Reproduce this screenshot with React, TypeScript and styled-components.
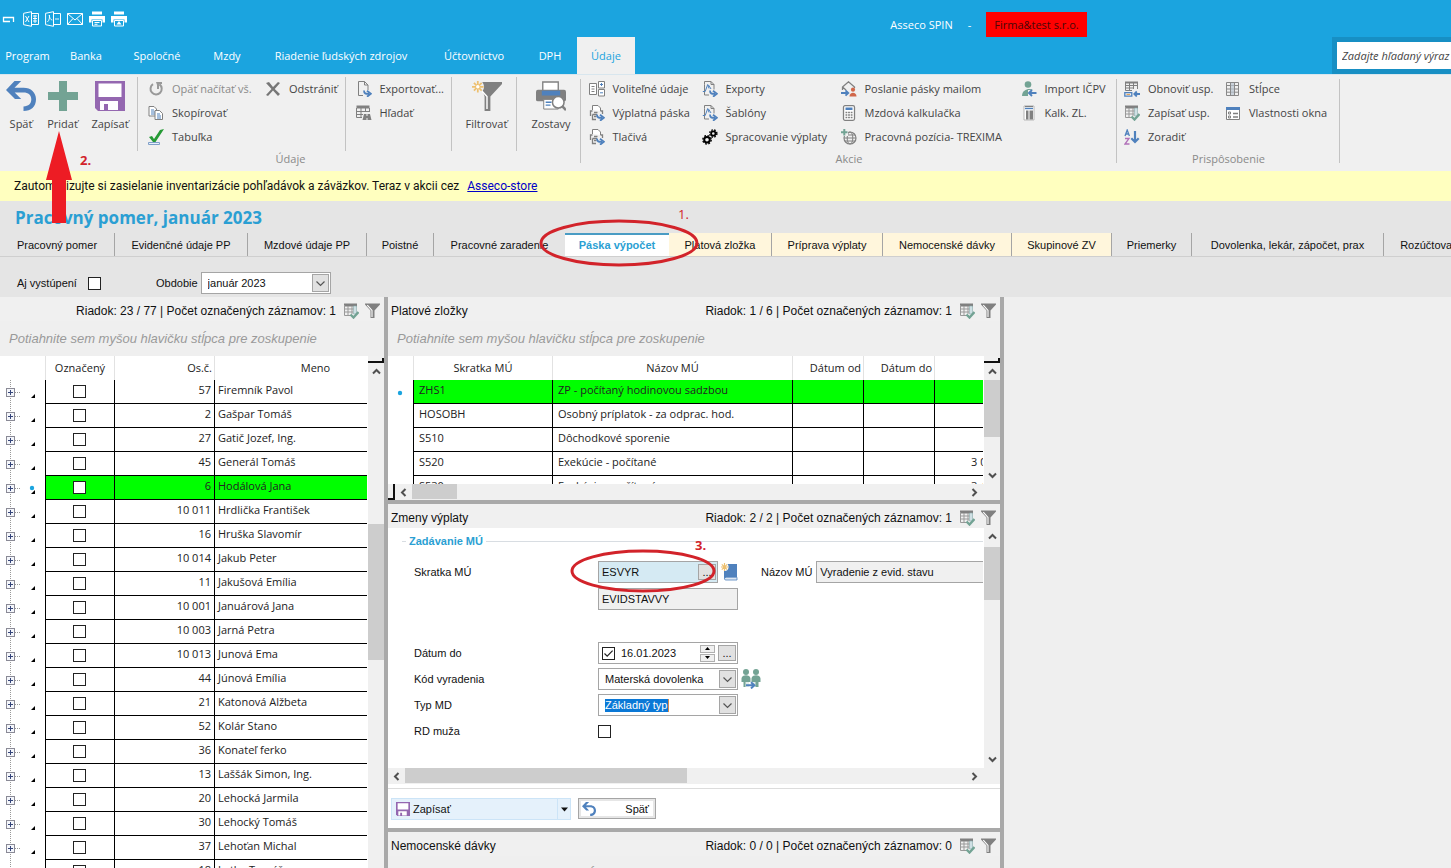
import React from 'react';
import styled, { createGlobalStyle, css } from 'styled-components';

const ui = '"Open Sans", "Noto Sans", sans-serif';
const classic = '"Liberation Sans", Arial, sans-serif';

const c = {
  blue: '#1ba4df',
  blueDark: '#178fc4',
  steel: '#4f81bd',
  green: '#73a394',
  gray: '#808080',
  panel: '#f0f0f0',
  bar: '#e5e5e5',
  split: '#a9a9a9',
  line: '#a0a0a0',
  red: '#d2232a',
  pick: '#00ff00',
};

const GlobalStyle = createGlobalStyle`
  *, *::before, *::after { box-sizing: border-box; }
  body { margin: 0; background: #efefef; }
  button, input, select { font: inherit; color: inherit; margin: 0; padding: 0; border: 0; border-radius: 0; background: none; outline: none; }
  svg { display: block; flex: none; }
`;

/* ---------- shell ---------- */
const Shell = styled.div`
  position: relative;
  display: flex;
  flex-direction: column;
  height: 100vh;
  overflow: hidden;
  background: #efefef;
  font-family: ${ui};
  font-size: 11px;
  line-height: 16px;
  color: #333;
  white-space: nowrap;
`;
const TitleBar = styled.header`
  display: flex;
  align-items: center;
  height: 37px;
  flex: none;
  background: ${c.blue};
  color: #fff;
`;
const QuickBar = styled.div`
  display: flex;
  gap: 6px;
  width: 128px;
  padding-left: 1px;
  flex: none;
`;
const QuickButton = styled.button`
  width: 16px;
  height: 16px;
`;
const Caption = styled.div`
  flex: 1;
  display: flex;
  align-items: flex-end;
  justify-content: center;
  gap: 15px;
  height: 37px;
  padding-left: 398px;
  line-height: 25px;
`;
const Company = styled.span`
  padding: 0 8px;
  background: #ff0000;
  color: #4a0808;
`;
const MenuBar = styled.nav`
  display: flex;
  height: 37px;
  flex: none;
  background: ${c.blue};
`;
const MenuItem = styled.button<{ $w: number; $active?: boolean }>`
  flex: none;
  width: ${p => p.$w}px;
  text-align: center;
  color: ${p => (p.$active ? c.blue : '#fff')};
  background: ${p => (p.$active ? c.panel : 'transparent')};
`;
const SearchSlot = styled.div`
  flex: none;
  width: 119px;
  margin-left: auto;
  padding: 5px 0 5px 5px;
  background: ${c.blueDark};
`;
const SearchInput = styled.input`
  width: 100%;
  height: 27px;
  padding-left: 5px;
  background: #fff;
  font-style: italic;
  &::placeholder { color: #444; opacity: 1; }
`;

/* ---------- ribbon ---------- */
const Ribbon = styled.div`
  display: flex;
  flex: none;
  height: 97px;
  background: ${c.panel};
  border-top: 1px solid #d8e6ee;
  color: #444;
`;
const RibbonGroup = styled.section<{ $w: number; $ruled?: boolean }>`
  flex: none;
  width: ${p => p.$w}px;
  display: flex;
  flex-direction: column;
  background: ${p => (p.$ruled ? `linear-gradient(#c3c3c3, #c3c3c3) right 4px / 1px 84px no-repeat` : 'none')};
`;
const GroupBody = styled.div`
  display: flex;
  padding-top: 2px;
  height: 76px;
`;
const GroupName = styled.div`
  text-align: center;
  color: #8a8a8a;
`;
const Cell = styled.div<{ $w: number; $ruled?: boolean; $lead?: number }>`
  flex: none;
  width: ${p => p.$w}px;
  height: 74px;
  display: flex;
  justify-content: center;
  padding-left: ${p => p.$lead ?? 0}px;
  border-right: ${p => (p.$ruled ? '1px solid #c3c3c3' : '0')};
`;
const BigButton = styled.button<{ $w: number }>`
  flex: none;
  width: ${p => p.$w}px;
  display: flex;
  flex-direction: column;
  align-items: center;
  gap: 5px;
  padding-top: 4px;
`;
const Stack = styled.div<{ $w: number }>`
  flex: none;
  width: ${p => p.$w}px;
  display: flex;
  flex-direction: column;
`;
const SmallButton = styled.button<{ $dim?: boolean }>`
  display: flex;
  align-items: center;
  gap: 8px;
  height: 24px;
  color: ${p => (p.$dim ? '#8a8a8a' : 'inherit')};
`;

/* ---------- notice, heading, tabs ---------- */
const Notice = styled.div`
  flex: none;
  display: flex;
  align-items: center;
  gap: 8px;
  height: 30px;
  padding-left: 14px;
  background: #ffffbf;
  color: #111;
  font-family: Roboto, ${ui};
  font-size: 12px;
  a { color: #0000c8; text-decoration: underline; }
`;
const Heading = styled.h1`
  flex: none;
  height: 32px;
  margin: 0;
  padding: 5px 0 0 15px;
  background: ${c.bar};
  font-size: 17px;
  line-height: 24px;
  font-weight: 700;
  color: #2b9fd3;
`;
const TabBar = styled.div`
  flex: none;
  display: flex;
  height: 24px;
  background: ${c.bar};
  border-bottom: 1px solid #cfcfcf;
  font-family: ${classic};
  overflow: hidden;
`;
const Tab = styled.button<{ $w: number; $kind?: 'warm' | 'on' | 'bare' }>`
  flex: none;
  width: ${p => p.$w}px;
  color: #111;
  border-right: 1px solid #a5a5a5;
  ${p => p.$kind === 'warm' && css`background: #fff6dc;`}
  ${p => p.$kind === 'bare' && css`border-right: 0;`}
  ${p =>
    p.$kind === 'on' &&
    css`
      border-right: 0;
      box-shadow: inset 0 2px 0 #4a9cc4;
      background: #fff;
      color: #2b9fd3;
      font-weight: 700;
    `}
`;
const FilterBar = styled.div`
  flex: none;
  display: flex;
  align-items: center;
  height: 40px;
  padding: 12px 0 0 17px;
  background: ${c.bar};
  font-family: ${classic};
  color: #111;
`;
const FilterField = styled.label<{ $gap: number; $w: number }>`
  display: flex;
  align-items: center;
  justify-content: flex-start;
  gap: ${p => p.$gap}px;
  width: ${p => p.$w}px;
`;

/* ---------- form controls ---------- */
const Tick = styled.input.attrs({ type: 'checkbox' })`
  appearance: none;
  flex: none;
  display: block;
  width: 13px;
  height: 13px;
  border: 1px solid #222;
  background: #fff;
  &:checked {
    background: #fff url("data:image/svg+xml,%3Csvg xmlns='http://www.w3.org/2000/svg' viewBox='0 0 11 11'%3E%3Cpath d='M1.5 5.5 4.2 8.2 9.6 2.6' fill='none' stroke='%23222' stroke-width='1.2'/%3E%3C/svg%3E");
  }
`;
const Box = styled.div<{ $w: number; $tone?: string }>`
  flex: none;
  display: flex;
  align-items: center;
  gap: 2px;
  width: ${p => p.$w}px;
  height: 22px;
  padding: 1px 1px 1px 3px;
  border: 1px solid #a5a5a5;
  background: ${p => p.$tone || '#fff'};
  input[type='text'] { flex: 1; min-width: 0; }
`;
const Pick = styled.select<{ $marked?: boolean }>`
  appearance: none;
  min-width: 0;
  margin-left: 3px;
  ${p =>
    p.$marked
      ? css`
          flex: none;
          margin-right: auto;
          height: 13px;
          line-height: 13px;
          background: #0a78d6;
          color: #fff;
          border-right: 1px solid #d98a4a;
        `
      : css`flex: 1;`}
`;
const DropMark = styled.span`
  flex: none;
  display: grid;
  place-items: center;
  width: 17px;
  height: 18px;
  border: 1px solid #a5a5a5;
  background: #e1e1e1;
`;
const DotsButton = styled.button`
  flex: none;
  width: 18px;
  height: 16px;
  border: 1px solid #a5a5a5;
  background: #e1e1e1;
  line-height: 12px;
`;
const Spinner = styled.div`
  flex: none;
  display: grid;
  gap: 1px;
  margin-right: 1px;
  button { display: grid; place-items: center; width: 15px; height: 8px; border: 1px solid #b0b0b0; background: ${c.panel}; }
`;
const Pad = styled.span`
  width: 2px;
`;

/* ---------- panes ---------- */
const Workspace = styled.main`
  flex: 1;
  min-height: 0;
  display: grid;
  grid-template-columns: 384px 616px 1fr;
  grid-template-rows: minmax(0, 1fr);
`;
const Column = styled.div<{ $split?: boolean }>`
  display: flex;
  flex-direction: column;
  min-width: 0;
  min-height: 0;
  overflow: hidden;
  ${p => p.$split && css`border-left: 4px solid ${c.split};`}
`;
const Blank = styled.div`
  border-left: 4px solid ${c.split};
  background: #efefef;
`;
const Pane = styled.section<{ $h?: number }>`
  display: flex;
  flex-direction: column;
  min-height: 0;
  background: #fff;
  ${p => (p.$h ? css`flex: none; height: ${p.$h}px; border-bottom: 4px solid ${c.split};` : css`flex: 1;`)}
`;
const PaneHead = styled.div`
  flex: none;
  display: flex;
  align-items: center;
  gap: 7px;
  height: 24px;
  padding: 3px 4px 0 3px;
  background: ${c.panel};
  font-family: ${classic};
  font-size: 12px;
  color: #111;
`;
const PaneTitle = styled.h2`
  flex: 1;
  margin: 0;
  font-size: 12px;
  font-weight: 400;
`;
const IconButton = styled.button`
  width: 15px;
  height: 16px;
`;
const GroupDrop = styled.div`
  flex: none;
  height: 35px;
  padding-left: 9px;
  background: #efefef;
  color: #9a9a9a;
  font-family: ${classic};
  font-size: 13px;
  font-style: italic;
  line-height: 35px;
`;
const ScrollArea = styled.div`
  flex: 1;
  min-height: 0;
  display: flex;
`;
const Clip = styled.div`
  flex: 1;
  min-width: 0;
  overflow: hidden;
`;
const Grid = styled.table<{ $w?: string }>`
  table-layout: fixed;
  width: ${p => p.$w || '100%'};
  border-spacing: 0;
  color: #222;
`;
const HeadCell = styled.th<{ $right?: boolean }>`
  height: 24px;
  padding: 0 2px;
  font-weight: 400;
  text-align: ${p => (p.$right ? 'right' : 'center')};
  border-right: 1px solid #e2e2e2;
  overflow: hidden;
  &:last-child { border-right: 0; }
`;
const Row = styled.tr<{ $on?: boolean }>`
  td { background: ${p => (p.$on ? c.pick : '#fff')}; }
  td:first-child { background: #fff; }
`;
const BodyCell = styled.td<{ $right?: boolean; $wide?: boolean }>`
  height: 24px;
  padding: 0 3px 3px ${p => (p.$wide ? 5 : 3)}px;
  text-align: ${p => (p.$right ? 'right' : 'left')};
  border-right: 1px solid #000;
  border-bottom: 1px solid #000;
  overflow: hidden;
  &:last-child { border-right: 0; padding-right: 0; }
`;
const SumCell = styled.div`
  padding-left: 33px;
  overflow: hidden;
`;
const TickCell = styled.td`
  padding: 0 0 0 27px;
  border-right: 1px solid #000;
  border-bottom: 1px solid #000;
`;
const TreeCell = styled.td`
  padding: 0;
  border-right: 1px solid #000;
`;
const TreeParts = styled.div`
  display: flex;
  height: 24px;
`;
const Expander = styled.button`
  width: 24px;
  height: 24px;
`;

/* ---------- scroll bars ---------- */
const VTrack = styled.div<{ $cap?: boolean }>`
  flex: none;
  width: 17px;
  display: flex;
  flex-direction: column;
  background: #f0f0f0;
  border-left: 1px solid #fff;
  ${p => p.$cap && css`
    &::before {
      content: '';
      flex: none;
      height: 7px;
      background: #fff;
      border-bottom: 2px solid #111;
      border-right: 2px solid #111;
      clip-path: polygon(0 5px, 14px 5px, 14px 2px, 100% 2px, 100% 100%, 0 100%);
    }
  `}
`;
const HTrack = styled.div`
  flex: none;
  height: 16px;
  display: flex;
  padding-right: 17px;
  background: #f0f0f0;
`;
const ArrowButton = styled.button`
  flex: none;
  display: grid;
  place-items: center;
  width: 16px;
  height: 17px;
  &:last-child { margin-top: auto; }
  ${HTrack} & { width: 17px; height: 16px; }
  ${HTrack} &:last-child { margin: 0 0 0 auto; }
`;
const VThumb = styled.div<{ $before: number; $size: number }>`
  flex: none;
  margin-top: ${p => p.$before}px;
  height: ${p => p.$size}px;
  background: #cdcdcd;
`;
const HThumb = styled.div<{ $size: number }>`
  flex: none;
  width: ${p => p.$size}px;
  height: 15px;
  background: #cdcdcd;
`;
const HCorner = styled.div`
  flex: none;
  width: 7px;
  height: 16px;
  border-right: 2px solid #111;
  border-bottom: 2px solid #111;
`;

/* ---------- entry form ---------- */
const Form = styled.div`
  flex: 1;
  min-width: 0;
  overflow: hidden;
  font-family: ${classic};
  color: #111;
  padding: 5px 0 0 14px;
`;
const Legend = styled.div`
  display: flex;
  align-items: center;
  gap: 3px;
  height: 16px;
  margin-bottom: 12px;
  color: #2b9fd3;
  font-weight: 700;
  &::before { content: ''; width: 4px; height: 1px; background: #d8dde2; }
  &::after { content: ''; flex: 1; height: 1px; background: #d8dde2; }
`;
const FieldRow = styled.div<{ $gapAfter?: number }>`
  display: grid;
  grid-template-columns: 184px auto;
  justify-content: start;
  align-items: center;
  height: 22px;
  padding-left: 12px;
  margin-bottom: ${p => p.$gapAfter ?? 4}px;
`;
const FieldParts = styled.div`
  display: flex;
  align-items: center;
  gap: 3px;
`;
const SideLabel = styled.label`
  margin: 0 1px 0 19px;
`;
const Actions = styled.div`
  flex: none;
  display: flex;
  gap: 7px;
  margin-top: 4px;
  padding: 9px 3px 8px;
  border-top: 1px solid #dcdcdc;
  font-family: ${classic};
  color: #111;
`;
const SplitButton = styled.div`
  display: flex;
  width: 180px;
  height: 22px;
  border: 1px solid #cce4f7;
  background: #e5f1fb;
`;
const SplitMain = styled.button`
  flex: 1;
  display: flex;
  align-items: center;
  gap: 3px;
  padding-left: 4px;
  border-right: 1px solid #cce4f7;
`;
const SplitDrop = styled.button`
  width: 12px;
  display: grid;
  place-items: center;
`;
const BackButton = styled.button`
  display: flex;
  align-items: center;
  justify-content: space-between;
  width: 78px;
  height: 21px;
  padding: 0 6px 0 3px;
  border: 1px solid #a5a5a5;
  box-shadow: inset 0 0 0 2px #e6e6e6;
`;

/* ---------- tutorial marks ---------- */
const Marks = styled.svg`
  position: absolute;
  left: 0;
  top: 0;
  pointer-events: none;
`;

/* ---------- icons ---------- */
type IP = { children: React.ReactNode; s?: number; vb?: string };
const Ic = ({ children, s = 16, vb = '0 0 16 16' }: IP) => (
  <svg width={s} height={s} viewBox={vb} fill="none" aria-hidden="true">{children}</svg>
);
const G = c.gray;
const B = c.steel;

const backPath = (
  <path d="M8.500 0H15.200L8.500 6.700H17.500C25 6.700 30 11.500 30 18.200 30 25.500 25 30 17.500 30V25.400C22.500 25.400 25.300 22.600 25.300 18.300 25.300 14 22.300 11.400 17.500 11.400H8.700L15.200 18H9L0 9z" fill={B} />
);
const BigBack = () => <Ic s={30} vb="0 0 30 30">{backPath}</Ic>;
const SmallBack = () => <Ic s={14} vb="0 0 30 30">{backPath}</Ic>;
const BigPlus = () => (
  <Ic s={30} vb="0 0 30 30"><path d="M11 0h8v11h11v8H19v11h-8V19H0v-8h11z" fill={c.green} /></Ic>
);
const Disk = ({ s }: { s: number }) => (
  <Ic s={s} vb="0 0 30 30">
    <path d="M0 0h30v30H3l-3-3z" fill="#9467b0" />
    <path d="M3.500 2.500h23v13.500h-23zM5 20h18v9H5z" fill="#fff" />
    <path d="M9 23h4v7H9z" fill="#9467b0" />
  </Ic>
);
const Funnel = () => (
  <Ic s={30} vb="0 0 31 31">
    <path d="M8 1h23v2L19 16v15h-6V16z" fill={G} />
    <path d="M10 10l5.500 6v13" stroke="#fff" strokeWidth="1.500" />
    <circle cx="6" cy="6" r="6.500" fill={c.panel} />
    <path d="M6 0v12M0 6h12M2 2l8 8M10 2l-8 8" stroke="#edc070" strokeWidth="1.800" />
    <circle cx="6" cy="6" r="1.800" fill="#fff" />
  </Ic>
);
const BigPrinter = () => (
  <Ic s={30} vb="0 0 31 31">
    <path d="M7 11V1h16v10" fill="#fff" stroke={G} strokeWidth="1.400" />
    <rect x="0" y="9" width="31" height="12" rx="2" fill={G} />
    <path d="M6 10h19v5H6z" fill={B} />
    <path d="M8 19h15v10H8z" fill="#fff" stroke={G} />
    <path d="M10 22h6M10 25h5" stroke={B} strokeWidth="1.400" />
    <circle cx="23" cy="22" r="6" fill="#fff" stroke={G} strokeWidth="1.600" />
    <path d="M27 26l4 4" stroke={G} strokeWidth="2.600" />
  </Ic>
);
const Reload = () => (
  <Ic><path d="M5 3.200A5.600 5.600 0 1 0 11.500 3.400" stroke="#999" strokeWidth="2" /><path d="M8 1h6v2l-3 .6V8H9V4z" fill="#999" /></Ic>
);
const Copy = () => (
  <Ic>
    <path d="M1 1.500h5l2.500 2.500v7H1z" fill="#fff" stroke={G} /><path d="M3 5h3M3 7h4M3 9h4" stroke={B} />
    <path d="M7 5.500h4.500L14.500 8.500v6H7z" fill="#fff" stroke={G} /><path d="M9 9h3M9 11h4M9 13h4" stroke={B} />
  </Ic>
);
const TableTick = () => (
  <Ic><path d="M.5 13.500h11v2H.5z" fill="#e8f0fa" stroke="#7f9fc8" /><path d="M1 8l3-1 2 3 6-9 4-1-8.500 13H5z" fill="#259a35" /></Ic>
);
const Cross = () => (
  <Ic><path d="M1 2l3-1 4 5 5-5 2 1-5.300 6L15 13l-2 2-5-5.500L3 15l-2-1 5.500-6z" fill="#777" /></Ic>
);
const Swoosh = () => <path d="M8 9.500c0 3 1.500 3.500 5 3.300M11 9.800l3.800 3-3.800 3" stroke={B} strokeWidth="1.800" />;
const ExportDoc = () => (
  <Ic><path d="M2.500.500h6L12 4v5M2.500.500v14H7M8.500.500V4H12" fill="none" stroke={G} /><Swoosh /></Ic>
);
const FindTable = () => (
  <Ic>
    <path d="M.5 2h13" stroke={G} strokeWidth="3" /><path d="M.5 3v9.500H6M13.500 3v4M.5 6.500h13M.5 9.500H7M5 3v9M9.500 3v4" stroke={G} />
    <path d="M8 9h2.500v2h1V9H14l1.500 6h-4v-2h-1v2h-4z" fill={G} />
  </Ic>
);
const Optional = () => (
  <Ic>
    <path d="M.5 2.500h7v11h-7zM9.500.500h6v6.500h-6zM9.500 8.500h6V15h-6z" fill="#fff" stroke={G} />
    <path d="M2.500 5.500h3M2.500 8h3M2.500 10.500h3" stroke={G} /><path d="M11 3.500h3M12.500 2v3M11 11.800h3" stroke={B} />
  </Ic>
);
const PrintSwoosh = () => (
  <Ic>
    <path d="M3.500 5V.500h5.500L11.500 3v3" fill="#fff" stroke={G} /><path d="M1.500 11V6h2M13.500 9V6h-2M3.500 9.500v5H7M3.500 9.500H8" stroke={G} strokeWidth="1.300" />
    <path d="M5 7.500h3.500M5 11.500h2.500" stroke={G} strokeWidth="1.300" /><Swoosh />
  </Ic>
);
const TemplateDoc = () => (
  <Ic>
    <path d="M2.500 3.500V.500h6.500L12 3.500v5M2.500 3.500v10.500H7M9 .500v3h3" stroke={G} /><path d="M.8 10.500h2.400l2.500-7 1.300 4M6.500 4l2.500 4" stroke={B} /><Swoosh />
  </Ic>
);
const Gears = () => (
  <Ic>
    <circle cx="5" cy="10.800" r="2.800" stroke="#000" strokeWidth="2" /><circle cx="5" cy="10.800" r="4.200" stroke="#000" strokeWidth="1.400" strokeDasharray="1.800 1.500" />
    <circle cx="11.300" cy="4.500" r="2.200" stroke="#000" strokeWidth="1.800" /><circle cx="11.300" cy="4.500" r="3.600" stroke="#000" strokeWidth="1.400" strokeDasharray="1.600 1.300" />
  </Ic>
);
const MailOut = () => (
  <Ic>
    <path d="M1.500 9V6L7.500.800l6 5.200v1M1.500 6l3.500 3" stroke={G} strokeWidth="1.300" /><path d="M0 12h7M4.500 9.300 7.300 12l-2.800 2.700" stroke={B} strokeWidth="1.800" />
    <circle cx="12" cy="8.700" r="2.100" fill="#d0674a" /><path d="M8.500 15.500c0-5 7-5 7 0z" fill="#d0674a" />
  </Ic>
);
const Calc = () => (
  <Ic>
    <rect x="2.500" y=".7" width="11" height="14.600" rx="1.500" stroke={G} strokeWidth="1.300" fill="#fff" /><path d="M4.500 2.500h7v2.500h-7z" fill={B} />
    <path d="M4.500 7.500h7M4.500 10h7M4.500 12.500h7" stroke={G} strokeWidth="1.500" strokeDasharray="1.800 .8" />
  </Ic>
);
const GlobePlus = () => (
  <Ic>
    <circle cx="9" cy="9" r="6" stroke={G} strokeWidth="1.200" /><path d="M3 9h12M4 6h10M4 12h10" stroke={G} /><ellipse cx="9" cy="9" rx="2.800" ry="6" stroke={G} />
    <path d="M0 0h7v7H0z" fill={c.panel} /><path d="M3.300 0v6.500M0 3.300h6.500" stroke={c.green} strokeWidth="2" />
  </Ic>
);
const PersonIn = () => (
  <Ic>
    <circle cx="7" cy="3.500" r="3.300" fill={c.green} /><path d="M1 15C1 6.500 13 6.500 13 11v4z" fill={c.green} />
    <path d="M7 9h9v7H7z" fill={c.panel} /><path d="M15.500 12H8M11 9l-3 3 3 3" stroke={B} strokeWidth="1.900" />
  </Ic>
);
const Notebook = () => (
  <Ic>
    <path d="M3 1h10v14H3z" fill="#fff" stroke="#aaa" strokeWidth=".8" /><path d="M4 1.500h8" stroke={G} strokeWidth="1.200" /><path d="M4 3.500h8" stroke={B} strokeWidth="1.400" />
    <path d="M5 5.500h2.500v9H5zM8.500 5.500H12v9H8.500z" fill={G} />
  </Ic>
);
const TableBack = () => (
  <Ic>
    <path d="M1 1.500h13" stroke={G} strokeWidth="2" /><path d="M1.500 2v7.500H8M13.500 2v6M1 4.500h13M1 7h9M5.500 2v7.500M9.500 2v6" stroke={G} />
    <path d="M.8 11.700h7v3.500h-7z" stroke={B} strokeWidth="1.300" /><path d="M2.500 13.400h3.500" stroke="#e09a4a" /><path d="M16 13h-5M12.800 10.500 10.300 13l2.500 2.500" stroke={B} strokeWidth="1.800" />
  </Ic>
);
const TableSave = () => (
  <Ic>
    <path d="M1 2h13" stroke={G} strokeWidth="3" /><path d="M1.500 2v10.500H8M1 6h12M1 9h9M5 3v9.500M9 3v8" stroke="#999" /><path d="M10.500 3h3v8h-3z" fill="#cfe0e4" stroke="#8aa" strokeWidth=".6" />
    <path d="M7.500 11.500l3 3 5-5.500" stroke={c.green} strokeWidth="2.400" />
  </Ic>
);
const SortAZ = () => (
  <Ic>
    <path d="M1 7 3.200 1 5.400 7M1.800 5h2.800" stroke={B} strokeWidth="1.300" /><path d="M1 9.500h4l-4 5.500h4.500" stroke="#b070b8" strokeWidth="1.300" />
    <path d="M11 2v11M7.300 9.300 11 13l3.700-3.700" stroke={B} strokeWidth="2.200" />
  </Ic>
);
const Columns = () => (
  <Ic>
    <path d="M1.500 1.500h12v13h-12zM1.500 4.500h12M1.500 8h12M1.500 11.200h12M5.500 1.500v13M9.500 1.500v13" stroke="#888" /><path d="M6 2h3v12H6z" fill="#b9c4d0" opacity=".7" />
  </Ic>
);
const WindowProps = () => (
  <Ic>
    <path d="M1.500 2.500h13v12h-13z" fill="#fff" stroke={G} /><path d="M1 2h14v3H1z" fill={B} /><path d="M3.500 7h2v2h-2zM3.500 11h2v2h-2z" stroke={G} /><path d="M8 8.500h5M8 12h5" stroke={G} strokeWidth="1.300" />
  </Ic>
);
const FunnelSmall = () => (
  <Ic s={15} vb="0 0 15 15"><path d="M0 .5h15v1L9.500 7.500v7.500h-4V7.500L0 1.500z" fill={G} /><path d="M2.300 2.200 7 7.500v6.500" stroke="#fff" strokeWidth="1.100" /></Ic>
);
const Chevron = ({ d }: { d: 'up' | 'down' | 'left' | 'right' }) => {
  const paths = { up: 'M1 6.500 4.500 3 8 6.500', down: 'M1 2.500 4.500 6 8 2.500', left: 'M6.500 1 3 4.500 6.500 8', right: 'M2.500 1 6 4.500 2.500 8' };
  return <Ic s={9} vb="0 0 9 9"><path d={paths[d]} stroke="#505050" strokeWidth="2" /></Ic>;
};
const ThinDown = () => <Ic s={9} vb="0 0 9 9"><path d="M.5 2.500 4.500 6.500 8.500 2.500" stroke="#555" strokeWidth="1.200" /></Ic>;
const BookNew = () => (
  <Ic s={18} vb="0 0 18 18">
    <path d="M4 1h12v13H4zM3 5h2v11c0 1-2 1-2-1z" fill={B} /><path d="M4 14.300h12v2.700H5c-2 0-2-2.700 0-2.700" fill="#dce6f2" stroke={B} strokeWidth=".8" />
    <circle cx="3.500" cy="4" r="4" fill="#fff" />
    <path d="M3.500 0v8M0 4h7.500M.8 1.300l5.400 5.400M6.200 1.300.8 6.700" stroke="#edc070" strokeWidth="1.200" />
  </Ic>
);
const People = () => (
  <Ic s={20} vb="0 0 20 20">
    <circle cx="5" cy="3" r="3" fill={c.green} /><circle cx="15" cy="3" r="3" fill={c.green} />
    <path d="M.5 9.500c0-4.500 9-4.500 9 0V13H8v5H2.500v-5h-2zM10.500 9.500c0-4.500 9-4.500 9 0V13h-2v5H12v-5h-1.500z" fill={c.green} />
    <path d="M4.500 13h10v6.500h-10z" fill="#fff" opacity=".8" /><path d="M5 16.300h8M10 13.200 13.400 16.300 10 19.400" stroke={B} strokeWidth="2" />
  </Ic>
);
const QuickOffice = ({ kind }: { kind: 'x' | 'pdf' }) => (
  <Ic>
    <path d="M8 2.500h7.500v11H8M.600 2.300 8.500.700v14.600L.600 13.700z" stroke="#fff" />
    {kind === 'x' ? (
      <path d="M2.500 5l3.500 6M6 5l-3.500 6M10 5h4M10 7.500h4M10 10h4M12 4v8" stroke="#fff" />
    ) : (
      <path d="M2.300 11c2-1 2.500-5 2-7 0 3 1.500 5 3 5M10 8h4" stroke="#fff" strokeWidth=".9" />
    )}
  </Ic>
);
const QuickPrinter = ({ up }: { up?: boolean }) => (
  <Ic>
    <path d="M3 .5h10v3H3zM0 5h16v6.500h-2.500V8.500h-11v3H0z" fill="#fff" />
    <path d="M3.500 9.500h9v5.500h-9z" stroke="#fff" />{up ? <path d="M8 10l2.500 3.500h-5z" fill="#fff" /> : <path d="M5.500 11.500h5M5.500 13.300h3" stroke="#fff" />}
  </Ic>
);

/* ---------- repeated pieces ---------- */
const Small = ({ icon, text, dim }: { icon: React.ReactNode; text: string; dim?: boolean }) => (
  <SmallButton type="button" $dim={dim}>{icon}{text}</SmallButton>
);
const Head = ({ title, info }: { title?: string; info: string }) => (
  <PaneHead>
    <PaneTitle>{title}</PaneTitle>
    <span>{info}</span>
    <IconButton type="button" aria-label="Uložiť zobrazenie"><TableSave /></IconButton>
    <IconButton type="button" aria-label="Filter"><FunnelSmall /></IconButton>
  </PaneHead>
);
const VScroll = ({ before, size, cap, down = true }: { before: number; size: number; cap?: boolean; down?: boolean }) => (
  <VTrack $cap={cap}>
    <ArrowButton type="button" aria-label="Nahor"><Chevron d="up" /></ArrowButton>
    <VThumb $before={before} $size={size} />
    {down && <ArrowButton type="button" aria-label="Nadol"><Chevron d="down" /></ArrowButton>}
  </VTrack>
);
const HScroll = ({ size, corner }: { size: number; corner?: boolean }) => (
  <HTrack>
    {corner && <HCorner />}
    <ArrowButton type="button" aria-label="Doľava"><Chevron d="left" /></ArrowButton>
    <HThumb $size={size} />
    <ArrowButton type="button" aria-label="Doprava"><Chevron d="right" /></ArrowButton>
  </HTrack>
);
const Tree = ({ on }: { on?: boolean }) => (
  <TreeParts>
    <Expander type="button" aria-label="Rozbaliť">
      <svg width="24" height="24" fill="none" aria-hidden="true">
        <path d="M10.500 0v24M15 12.500h6" stroke="#999" strokeDasharray="1 1" />
        <rect x="6.500" y="8.500" width="8" height="8" fill="#f4f6fb" stroke="#8a8a96" />
        <path d="M8 12.500h5M10.500 10v5" stroke="#35457a" />
      </svg>
    </Expander>
    <svg width="20" height="24" aria-hidden="true">
      <path d="M11 14v4H7z" fill="#000" />
      {on && <circle cx="8" cy="12" r="2.200" fill="#1ba4df" />}
    </svg>
  </TreeParts>
);

const menu: [string, number][] = [['Program', 55], ['Banka', 62], ['Spoločné', 80], ['Mzdy', 60], ['Riadenie ľudských zdrojov', 168], ['Účtovníctvo', 98], ['DPH', 54]];
const tabs: [string, number, ('warm' | 'on' | 'bare')?][] = [
  ['Pracovný pomer', 115], ['Evidenčné údaje PP', 133], ['Mzdové údaje PP', 119], ['Poistné', 67], ['Pracovné zaradenie', 131, 'bare'],
  ['Páska výpočet', 104, 'on'], ['Platová zložka', 103, 'warm'], ['Príprava výplaty', 111, 'warm'], ['Nemocenské dávky', 129, 'warm'],
  ['Skupinové ZV', 100, 'warm'], ['Priemerky', 80], ['Dovolenka, lekár, zápočet, prax', 192], ['Rozúčtovanie', 100],
];
const people: [string, string][] = [
  ['57', 'Firemník Pavol'], ['2', 'Gašpar Tomáš'], ['27', 'Gatič Jozef, Ing.'], ['45', 'Generál Tomáš'], ['6', 'Hodálová Jana'],
  ['10 011', 'Hrdlička František'], ['16', 'Hruška Slavomír'], ['10 014', 'Jakub Peter'], ['11', 'Jakušová Emília'], ['10 001', 'Januárová Jana'],
  ['10 003', 'Jarná Petra'], ['10 013', 'Junová Ema'], ['44', 'Júnová Emília'], ['21', 'Katonová Alžbeta'], ['52', 'Kolár Stano'],
  ['36', 'Konateľ ferko'], ['13', 'Laššák Simon, Ing.'], ['20', 'Lehocká Jarmila'], ['30', 'Lehocký Tomáš'], ['37', 'Lehoťan Michal'], ['18', 'Letko Tomáš'],
];
const wages: [string, string, string][] = [
  ['ZHS1', 'ZP - počítaný hodinovou sadzbou', ''], ['HOSOBH', 'Osobný príplatok - za odprac. hod.', ''], ['S510', 'Dôchodkové sporenie', ''],
  ['S520', 'Exekúcie - počítané', '3 000'], ['S530', 'Exekúcie - počítané', '3 400'],
];
const dropHint = 'Potiahnite sem myšou hlavičku stĺpca pre zoskupenie';

export default function App() {
  return (
    <Shell>
      <GlobalStyle />
      <TitleBar>
        <QuickBar>
          <QuickButton type="button" aria-label="Aplikácia"><Ic><path d="M12.500 11V6.500H2.500v4H9" stroke="#fff" strokeWidth="1.300" /></Ic></QuickButton>
          <QuickButton type="button" aria-label="Excel"><QuickOffice kind="x" /></QuickButton>
          <QuickButton type="button" aria-label="PDF"><QuickOffice kind="pdf" /></QuickButton>
          <QuickButton type="button" aria-label="E-mail"><Ic><path d="M.5 2.500h15v11H.5zM.5 2.500 8 9l7.500-6.500M.5 13.500 6 7.500M15.500 13.500 10 7.500" stroke="#fff" /></Ic></QuickButton>
          <QuickButton type="button" aria-label="Tlačiť"><QuickPrinter /></QuickButton>
          <QuickButton type="button" aria-label="Rýchla tlač"><QuickPrinter up /></QuickButton>
        </QuickBar>
        <Caption>
          <span>Asseco SPIN</span>
          <span>-</span>
          <Company>Firma&amp;test s.r.o.</Company>
        </Caption>
      </TitleBar>
      <MenuBar>
        {menu.map(([t, w]) => <MenuItem key={t} type="button" $w={w}>{t}</MenuItem>)}
        <MenuItem type="button" $w={58} $active>Údaje</MenuItem>
        <SearchSlot><SearchInput type="text" aria-label="Hľadať" placeholder="Zadajte hľadaný výraz" /></SearchSlot>
      </MenuBar>

      <Ribbon>
        <RibbonGroup $w={581} $ruled>
          <GroupBody>
            <Cell $w={138} $ruled>
              <BigButton type="button" $w={42}><BigBack />Späť</BigButton>
              <BigButton type="button" $w={41}><BigPlus />Pridať</BigButton>
              <BigButton type="button" $w={54}><Disk s={30} />Zapísať</BigButton>
            </Cell>
            <Cell $w={208} $ruled>
              <Stack $w={117}>
                <Small icon={<Reload />} text="Opäť načítať vš." dim />
                <Small icon={<Copy />} text="Skopírovať" />
                <Small icon={<TableTick />} text="Tabuľka" />
              </Stack>
              <Stack $w={70}><Small icon={<Cross />} text="Odstrániť" /></Stack>
            </Cell>
            <Cell $w={106} $ruled>
              <Stack $w={86}>
                <Small icon={<ExportDoc />} text="Exportovať..." />
                <Small icon={<FindTable />} text="Hľadať" />
              </Stack>
            </Cell>
            <Cell $w={65} $lead={5} $ruled><BigButton type="button" $w={58}><Funnel />Filtrovať</BigButton></Cell>
            <Cell $w={63} $lead={5}><BigButton type="button" $w={58}><BigPrinter />Zostavy</BigButton></Cell>
          </GroupBody>
          <GroupName>Údaje</GroupName>
        </RibbonGroup>
        <RibbonGroup $w={536} $ruled>
          <GroupBody>
            <Cell $w={535}>
              <Stack $w={113}>
                <Small icon={<Optional />} text="Voliteľné údaje" />
                <Small icon={<PrintSwoosh />} text="Výplatná páska" />
                <Small icon={<PrintSwoosh />} text="Tlačivá" />
              </Stack>
              <Stack $w={139}>
                <Small icon={<TemplateDoc />} text="Exporty" />
                <Small icon={<TemplateDoc />} text="Šablóny" />
                <Small icon={<Gears />} text="Spracovanie výplaty" />
              </Stack>
              <Stack $w={180}>
                <Small icon={<MailOut />} text="Poslanie pásky mailom" />
                <Small icon={<Calc />} text="Mzdová kalkulačka" />
                <Small icon={<GlobePlus />} text="Pracovná pozícia- TREXIMA" />
              </Stack>
              <Stack $w={88}>
                <Small icon={<PersonIn />} text="Import IČPV" />
                <Small icon={<Notebook />} text="Kalk. ZL." />
              </Stack>
            </Cell>
          </GroupBody>
          <GroupName>Akcie</GroupName>
        </RibbonGroup>
        <RibbonGroup $w={223} $ruled>
          <GroupBody>
            <Cell $w={222}>
              <Stack $w={101}>
                <Small icon={<TableBack />} text="Obnoviť usp." />
                <Small icon={<TableSave />} text="Zapísať usp." />
                <Small icon={<SortAZ />} text="Zoradiť" />
              </Stack>
              <Stack $w={107}>
                <Small icon={<Columns />} text="Stĺpce" />
                <Small icon={<WindowProps />} text="Vlastnosti okna" />
              </Stack>
            </Cell>
          </GroupBody>
          <GroupName>Prispôsobenie</GroupName>
        </RibbonGroup>
      </Ribbon>

      <Notice>
        <span>Zautomatizujte si zasielanie inventarizácie pohľadávok a záväzkov. Teraz v akcii cez</span>
        <a href="#store">Asseco-store</a>
      </Notice>
      <Heading>Pracovný pomer, január 2023</Heading>
      <TabBar>
        {tabs.map(([t, w, k]) => <Tab key={t} type="button" $w={w} $kind={k}>{t}</Tab>)}
      </TabBar>
      <FilterBar>
        <FilterField $gap={11} $w={139}>Aj vystúpení<Tick /></FilterField>
        <FilterField $gap={3} $w={180}>
          Obdobie
          <Box $w={130}>
            <Pick defaultValue="a"><option value="a">január 2023</option></Pick>
            <DropMark><ThinDown /></DropMark>
          </Box>
        </FilterField>
      </FilterBar>

      <Workspace>
        <Column>
          <Pane>
            <Head info="Riadok: 23 / 77 | Počet označených záznamov: 1" />
            <GroupDrop>{dropHint}</GroupDrop>
            <ScrollArea>
              <Clip>
                <Grid $w="416px">
                  <colgroup><col width="46" /><col width="69" /><col width="100" /><col /></colgroup>
                  <thead><tr><HeadCell /><HeadCell>Označený</HeadCell><HeadCell $right>Os.č.</HeadCell><HeadCell>Meno</HeadCell></tr></thead>
                  <tbody>
                    {people.map(([id, name]) => (
                      <Row key={id} $on={id === '6'}>
                        <TreeCell><Tree on={id === '6'} /></TreeCell>
                        <TickCell><Tick aria-label={`Označiť ${name}`} /></TickCell>
                        <BodyCell $right>{id}</BodyCell>
                        <BodyCell>{name}</BodyCell>
                      </Row>
                    ))}
                  </tbody>
                </Grid>
              </Clip>
              <VScroll cap before={144} size={136} down={false} />
            </ScrollArea>
          </Pane>
        </Column>

        <Column $split>
          <Pane $h={207}>
            <Head title="Platové zložky" info="Riadok: 1 / 6 | Počet označených záznamov: 1" />
            <GroupDrop>{dropHint}</GroupDrop>
            <ScrollArea>
              <Clip>
                <Grid>
                  <colgroup><col width="26" /><col width="139" /><col width="240" /><col width="71" /><col width="71" /><col /></colgroup>
                  <thead><tr><HeadCell /><HeadCell>Skratka MÚ</HeadCell><HeadCell>Názov MÚ</HeadCell><HeadCell $right>Dátum od</HeadCell><HeadCell $right>Dátum do</HeadCell><HeadCell /></tr></thead>
                  <tbody>
                    {wages.map(([code, name, sum]) => (
                      <Row key={code} $on={code === 'ZHS1'}>
                        <TreeCell>
                          {code === 'ZHS1' && <svg width="24" height="23" aria-hidden="true"><circle cx="12" cy="12" r="2.200" fill="#1ba4df" /></svg>}
                        </TreeCell>
                        <BodyCell $wide>{code}</BodyCell>
                        <BodyCell $wide>{name}</BodyCell>
                        <BodyCell />
                        <BodyCell />
                        <BodyCell><SumCell>{sum}</SumCell></BodyCell>
                      </Row>
                    ))}
                  </tbody>
                </Grid>
              </Clip>
              <VScroll cap before={0} size={57} />
            </ScrollArea>
            <HScroll size={45} corner />
          </Pane>

          <Pane $h={328}>
            <Head title="Zmeny výplaty" info="Riadok: 2 / 2 | Počet označených záznamov: 1" />
            <ScrollArea>
              <Form>
                <Legend>Zadávanie MÚ</Legend>
                <FieldRow $gapAfter={5}>
                  <label htmlFor="code">Skratka MÚ</label>
                  <FieldParts>
                    <Box $w={120} $tone="#d5eaf3"><input id="code" type="text" defaultValue="ESVYR" /><DotsButton type="button" aria-label="Vybrať MÚ">...</DotsButton></Box>
                    <button type="button" aria-label="Číselník MÚ"><BookNew /></button>
                    <SideLabel htmlFor="name">Názov MÚ</SideLabel>
                    <Box $w={200} $tone="#f0f0f0"><input id="name" type="text" readOnly value="Vyradenie z evid. stavu" /></Box>
                  </FieldParts>
                </FieldRow>
                <FieldRow $gapAfter={32}>
                  <span />
                  <Box $w={140} $tone="#f0f0f0"><input type="text" aria-label="Kód MÚ" readOnly value="EVIDSTAVVY" /></Box>
                </FieldRow>
                <FieldRow>
                  <label htmlFor="until">Dátum do</label>
                  <Box $w={140}>
                    <Tick aria-label="Dátum zadaný" defaultChecked />
                    <Pad />
                    <input id="until" type="text" defaultValue="16.01.2023" />
                    <Spinner>
                      <button type="button" aria-label="Zvýšiť"><Ic s={5} vb="0 0 5 5"><path d="M0 4h5L2.500 1z" fill="#000" /></Ic></button>
                      <button type="button" aria-label="Znížiť"><Ic s={5} vb="0 0 5 5"><path d="M0 1h5L2.500 4z" fill="#000" /></Ic></button>
                    </Spinner>
                    <DotsButton type="button" aria-label="Kalendár">...</DotsButton>
                  </Box>
                </FieldRow>
                <FieldRow>
                  <label htmlFor="reason">Kód vyradenia</label>
                  <FieldParts>
                    <Box $w={140}>
                      <Pick id="reason" defaultValue="m"><option value="m">Materská dovolenka</option></Pick>
                      <DropMark><ThinDown /></DropMark>
                    </Box>
                    <button type="button" aria-label="Osoby"><People /></button>
                  </FieldParts>
                </FieldRow>
                <FieldRow>
                  <label htmlFor="type">Typ MD</label>
                  <Box $w={140}>
                    <Pick $marked id="type" defaultValue="z"><option value="z">Základný typ</option></Pick>
                    <DropMark><ThinDown /></DropMark>
                  </Box>
                </FieldRow>
                <FieldRow>
                  <label htmlFor="rd">RD muža</label>
                  <Tick id="rd" />
                </FieldRow>
              </Form>
              <VScroll before={2} size={53} />
            </ScrollArea>
            <HScroll size={282} />
            <Actions>
              <SplitButton>
                <SplitMain type="button"><Disk s={14} />Zapísať</SplitMain>
                <SplitDrop type="button" aria-label="Ďalšie možnosti"><Ic s={7} vb="0 0 7 7"><path d="M0 1.500h7L3.500 5.500z" fill="#111" /></Ic></SplitDrop>
              </SplitButton>
              <BackButton type="button"><SmallBack />Späť</BackButton>
            </Actions>
          </Pane>

          <Pane>
            <Head title="Nemocenské dávky" info="Riadok: 0 / 0 | Počet označených záznamov: 0" />
            <GroupDrop>{dropHint}</GroupDrop>
          </Pane>
        </Column>
        <Blank />
      </Workspace>

      <Marks width="760" height="620" fill="none" role="img" aria-label="Kroky 1 až 3">
        <ellipse cx="619" cy="243" rx="78" ry="22" stroke={c.red} strokeWidth="3" />
        <ellipse cx="643" cy="571" rx="71" ry="20" stroke={c.red} strokeWidth="3" />
        <path d="M59 131 72 180H66V223H52V180H46z" fill="#ed1c24" />
        <g fill={c.red} fontFamily='"Open Sans", sans-serif' fontSize="13">
          <text x="678" y="219">1.</text>
          <text x="80" y="165" fontWeight="700">2.</text>
          <text x="695" y="550" fontWeight="700">3.</text>
        </g>
      </Marks>
    </Shell>
  );
}
